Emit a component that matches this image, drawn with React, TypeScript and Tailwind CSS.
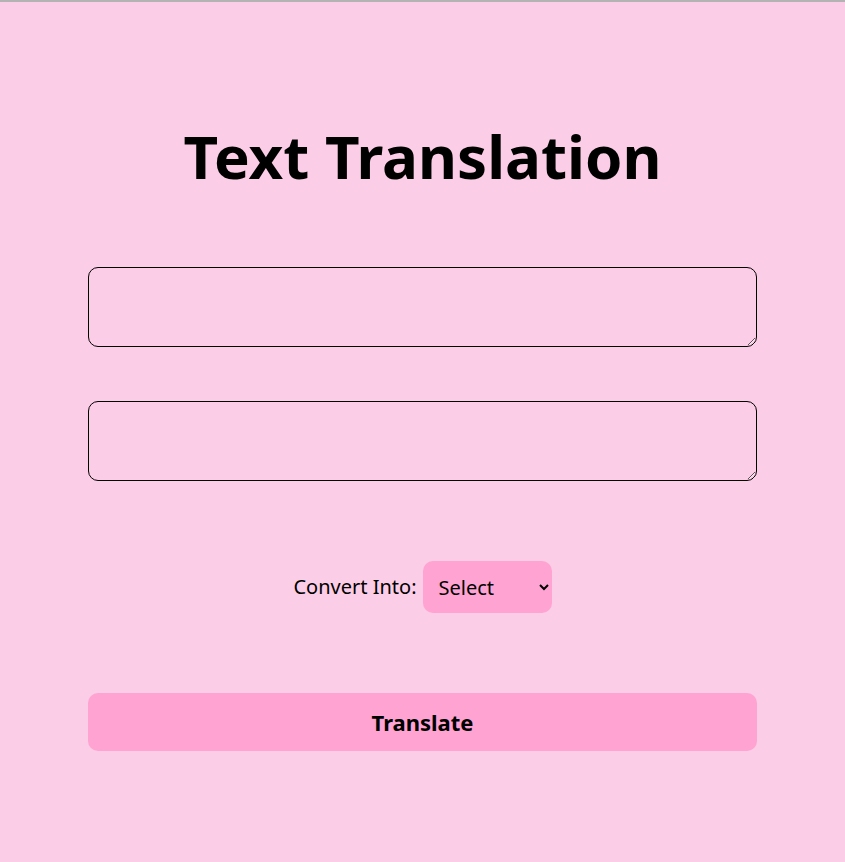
export default function App() {
    return (
        <div className="min-h-[862px] bg-[#fccde6] border-t-2 border-[#b3b3b3] font-['Noto_Sans',sans-serif] text-black">
            <div className="w-[669px] mx-auto pt-[104px]">
                <h1 className="text-center text-[60px] font-bold leading-[100px]">Text Translation</h1>

                <textarea className="block w-full h-[80px] mt-[61px] border border-black rounded-[10px] bg-transparent outline-none" />
                <textarea className="block w-full h-[80px] mt-[54px] border border-black rounded-[10px] bg-transparent outline-none" />

                <div className="flex items-center justify-center gap-[6px] mt-[80px]">
                    <label className="text-[20px]">Convert Into:</label>
                    <select className="h-[52px] w-[129px] px-[12px] text-[20px] bg-[#ffa3d2] rounded-[10px] outline-none">
                        <option>Select</option>
                        <option>Hindi</option>
                        <option>French</option>
                    </select>
                </div>

                <button className="block w-full h-[58px] mt-[80px] bg-[#ffa3d2] rounded-[10px] text-[22px] font-bold">
                    Translate
                </button>
            </div>
        </div>
    )
}
